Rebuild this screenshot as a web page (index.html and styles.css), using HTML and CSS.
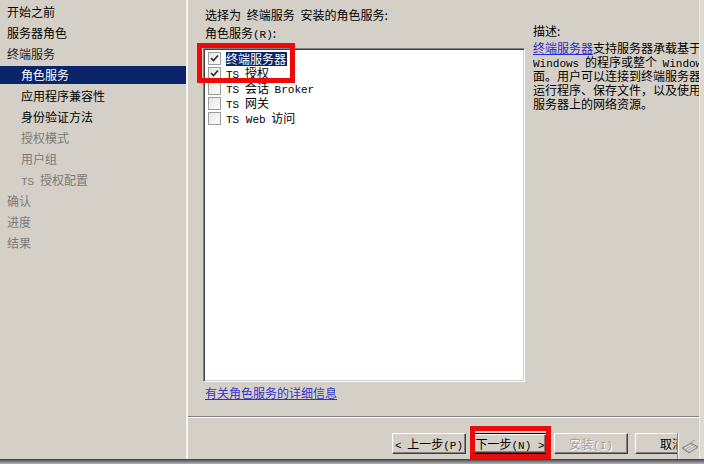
FILE: index.html
```html
<!DOCTYPE html>
<html lang="zh-CN">

<head>
    <meta charset="UTF-8">
    <title>添加角色向导 - 角色服务</title>
    <link rel="stylesheet" href="styles.css">
</head>

<body>
    <div class="window">
        <div class="frame">
            <!-- Wizard steps -->
            <ul class="steps">
                <li class="step done">开始之前</li>
                <li class="step done">服务器角色</li>
                <li class="step group">终端服务</li>
                <li class="step sub current">角色服务</li>
                <li class="step sub done">应用程序兼容性</li>
                <li class="step sub done">身份验证方法</li>
                <li class="step sub">授权模式</li>
                <li class="step sub">用户组</li>
                <li class="step sub"><span class="en">TS</span> 授权配置</li>
                <li class="step">确认</li>
                <li class="step">进度</li>
                <li class="step">结果</li>
            </ul>

            <div class="main">
                <div class="content">
                    <div class="services">
                        <div class="prompt">选择为 终端服务 安装的角色服务:</div>
                        <div class="label">角色服务<span class="en">(R)</span>:</div>

                        <!-- Role services list -->
                        <div class="listbox">
                            <div class="option">
                                <span class="check"><svg width="11" height="11" viewBox="0 0 11 11"><polyline points="2,5 4.5,7.5 9,2.5" /></svg></span>
                                <span class="selected">终端服务器</span>
                            </div>
                            <div class="option">
                                <span class="check"><svg width="11" height="11" viewBox="0 0 11 11"><polyline points="2,5 4.5,7.5 9,2.5" /></svg></span>
                                <span><span class="en">TS</span> 授权</span>
                            </div>
                            <div class="option">
                                <span class="check"></span>
                                <span><span class="en">TS</span> 会话 <span class="en">Broker</span></span>
                            </div>
                            <div class="option">
                                <span class="check"></span>
                                <span><span class="en">TS</span> 网关</span>
                            </div>
                            <div class="option">
                                <span class="check"></span>
                                <span><span class="en">TS Web</span> 访问</span>
                            </div>
                        </div>

                        <a class="more" href="#">有关角色服务的详细信息</a>

                        <div class="mark mark-list"></div>
                    </div>

                    <!-- Description -->
                    <div class="desc">
                        <div class="desc-title">描述:</div>
                        <div class="desc-line"><a href="#">终端服务器</a>支持服务器承载基于</div>
                        <div class="desc-line"><span class="en">Windows</span> 的程序或整个 <span class="en">Windows</span> 桌</div>
                        <div class="desc-line">面。用户可以连接到终端服务器来</div>
                        <div class="desc-line">运行程序、保存文件，以及使用该</div>
                        <div class="desc-line">服务器上的网络资源。</div>
                    </div>
                </div>

                <div class="footer">
                    <button class="btn"><span class="en">&lt;</span> 上一步<span class="en">(P)</span></button>
                    <button class="btn default">下一步<span class="en">(N) &gt;</span></button>
                    <button class="btn disabled">安装<span class="en">(I)</span></button>
                    <button class="btn">取消</button>

                    <div class="mark mark-next"></div>

                    <!-- Language bar -->
                    <div class="langbar">
                        <svg width="18" height="16" viewBox="0 0 18 16">
                            <path d="M1 9 L10 4 L17 8 L8 14 Z" fill="#b4b4b4" stroke="#858585" />
                            <path d="M4 9.2 L10.4 5.8 M6 10.6 L12.6 7 M8 12 L14.6 8.3" stroke="#e6e6e6" stroke-width="0.9" />
                            <path d="M10 4 Q11 1.5 14 1.5" fill="none" stroke="#9a9a9a" />
                        </svg>
                    </div>
                </div>
            </div>

            <div class="edge"></div>
        </div>
        <div class="shadow"></div>
    </div>
</body>
</html>
```

FILE: styles.css
```css
body {
    margin: 0;
    width: 704px;
    height: 464px;
    overflow: hidden;
    background-color: #d4d0c8;
    font-family: "Noto Sans CJK SC", sans-serif;
    font-size: 12px;
    color: #000;
    word-spacing: 3px;
}

.en {
    font-family: "Liberation Mono", monospace;
    font-size: 11px;
    line-height: 1;
    word-spacing: 0;
}

.window {
    display: flex;
    flex-direction: column;
    height: 464px;
}

.frame {
    display: flex;
    height: 459px;
}

/* Steps sidebar */
.steps {
    list-style: none;
    margin: 0;
    padding: 3px 0 0;
    width: 186px;
    border-right: 2px solid #f6f5f1;
}

.step {
    height: 18px;
    line-height: 18px;
    margin-bottom: 3px;
    padding-left: 7px;
    color: #7a7a7a;
    white-space: nowrap;
}

.step.sub {
    padding-left: 21px;
}

.step.done {
    color: #000;
}

.step.group {
    color: #1c1c1c;
}

.step.current {
    background-color: #0a246a;
    color: #fff;
}

/* Main panel */
.main {
    flex: 1;
    display: flex;
    flex-direction: column;
    overflow: hidden;
}

.content {
    height: 416px;
    display: flex;
    gap: 8px;
    padding: 7px 0 0 15px;
    box-sizing: border-box;
}

.services {
    position: relative;
    width: 322px;
    flex-shrink: 0;
}

.prompt {
    height: 16px;
    line-height: 16px;
    padding-left: 2px;
}

.label {
    height: 16px;
    line-height: 16px;
    margin-top: 2px;
    padding-left: 2px;
}

.listbox {
    margin-top: 7px;
    height: 334px;
    box-sizing: border-box;
    background-color: #fff;
    border: 1px solid;
    border-color: #808080 #fff #fff #808080;
    box-shadow: inset 1px 1px #404040, inset -1px -1px #d4d0c8;
    padding: 2px 0 0 4px;
}

.option {
    display: flex;
    align-items: center;
    height: 15px;
    line-height: 14px;
    white-space: nowrap;
}

.check {
    width: 13px;
    height: 13px;
    flex-shrink: 0;
    box-sizing: border-box;
    border: 1px solid #9c9c9c;
    background: linear-gradient(135deg, #e6e6e6, #fbfbfb);
    margin-right: 5px;
    display: flex;
    align-items: center;
    justify-content: center;
}

.check polyline {
    fill: none;
    stroke: #2a2a2a;
    stroke-width: 1.7;
}

.selected {
    background-color: #0a246a;
    color: #fff;
    padding: 0 1px 0 0;
}

.more {
    display: block;
    margin-top: 3px;
    height: 16px;
    line-height: 16px;
    padding-left: 2px;
    color: #3333cc;
}

/* Red annotation frames */
.mark {
    position: absolute;
    border: 5px solid #ec0a0a;
    box-sizing: border-box;
}

.mark-list {
    left: -6px;
    top: 36px;
    width: 98px;
    height: 40px;
}

.desc {
    flex: 1;
    overflow: hidden;
    padding-top: 17px;
    white-space: nowrap;
}

.desc-title {
    height: 14px;
    line-height: 14px;
    margin-bottom: 3px;
}

.desc-line {
    height: 14px;
    line-height: 14px;
}

.desc a {
    color: #2a2ad0;
}

/* Footer buttons */
.footer {
    position: relative;
    flex: 1;
    border-top: 1px solid #808080;
    box-shadow: inset 0 1px #fff;
    display: flex;
    gap: 7px;
    padding: 16px 0 0 204px;
}

.btn {
    width: 74px;
    height: 21px;
    flex-shrink: 0;
    box-sizing: border-box;
    padding: 0;
    font-family: inherit;
    font-size: 12px;
    word-spacing: 3px;
    color: #000;
    background-color: #d4d0c8;
    border: 1px solid;
    border-color: #fff #404040 #404040 #fff;
    box-shadow: inset -1px -1px #808080;
}

.btn.default {
    border-color: #000;
    box-shadow: inset 1px 1px #fff, inset -1px -1px #404040, inset -2px -2px #808080;
}

.btn.disabled {
    color: #a0a0a0;
    text-shadow: 1px 1px #fff;
}

.mark-next {
    left: 282px;
    top: 9px;
    width: 81px;
    height: 33px;
}

.langbar {
    position: absolute;
    left: 489px;
    top: 16px;
    width: 22px;
    height: 27px;
    background-color: #d4d0c8;
    border-left: 1px solid #808080;
    box-shadow: inset 1px 0 #fff;
    display: flex;
    justify-content: flex-end;
    padding-top: 6px;
    box-sizing: border-box;
}

.edge {
    width: 4px;
    background-color: #dddad4;
    border-left: 1px solid #ecebe7;
}

.shadow {
    height: 5px;
    background: linear-gradient(#3c3c3c, #7c7c7c 50%, #b4b4b4);
}
```
